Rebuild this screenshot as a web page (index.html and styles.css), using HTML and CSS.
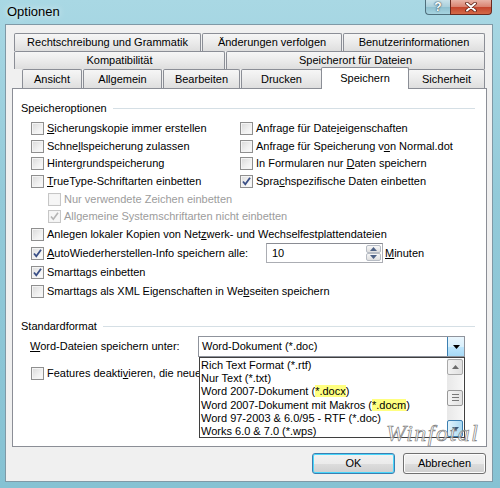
FILE: index.html
```html
<!DOCTYPE html>
<html lang="de">
<head>
    <meta charset="UTF-8">
    <title>Optionen</title>
    <link rel="stylesheet" href="styles.css">
</head>
<body>
    <div class="window">
        <div class="titlebar">
            <span class="title">Optionen</span>
            <div class="caption-buttons">
                <span class="cap-btn help">?</span>
                <span class="cap-btn close">
                    <svg width="14" height="10" viewBox="0 0 14 10"><path d="M3 1.5 L11 8.5 M11 1.5 L3 8.5" stroke="#5a1d12" stroke-width="3.6" stroke-linecap="round"/><path d="M3 1.5 L11 8.5 M11 1.5 L3 8.5" stroke="#ffffff" stroke-width="2" stroke-linecap="round"/></svg>
                </span>
            </div>
        </div>

        <div class="client">
            <div class="tabs">
                <div class="tab-row row-a">
                    <div class="tab t-recht">Rechtschreibung und Grammatik</div>
                    <div class="tab t-aend">Änderungen verfolgen</div>
                    <div class="tab t-benutzer">Benutzerinformationen</div>
                </div>
                <div class="tab-row row-b">
                    <div class="tab t-kompat">Kompatibilität</div>
                    <div class="tab t-ort">Speicherort für Dateien</div>
                </div>
                <div class="tab-row row-c">
                    <div class="tab t-ansicht">Ansicht</div>
                    <div class="tab t-allg">Allgemein</div>
                    <div class="tab t-bearb">Bearbeiten</div>
                    <div class="tab t-druck">Drucken</div>
                    <div class="tab t-speich selected">Speichern</div>
                    <div class="tab t-sicher">Sicherheit</div>
                </div>
            </div>

            <div class="panel">
                <div class="group-head"><span>Speicheroptionen</span><i class="rule"></i></div>

                <div class="options">
                    <div class="row">
                        <div class="cell-left"><span class="cb"></span><span class="lbl"><u>S</u>icherungskopie immer erstellen</span></div>
                        <div class="cell-right"><span class="cb"></span><span class="lbl">Anfrage für Date<u>i</u>eigenschaften</span></div>
                    </div>
                    <div class="row h17">
                        <div class="cell-left"><span class="cb"></span><span class="lbl">Schne<u>l</u>lspeicherung zulassen</span></div>
                        <div class="cell-right"><span class="cb"></span><span class="lbl">Anfrage für Speicherung v<u>o</u>n Normal.dot</span></div>
                    </div>
                    <div class="row">
                        <div class="cell-left"><span class="cb"></span><span class="lbl">Hinter<u>g</u>rundspeicherung</span></div>
                        <div class="cell-right"><span class="cb"></span><span class="lbl">In Formularen nur <u>D</u>aten speichern</span></div>
                    </div>
                    <div class="row">
                        <div class="cell-left"><span class="cb"></span><span class="lbl"><u>T</u>rueType-Schriftarten einbetten</span></div>
                        <div class="cell-right"><span class="cb checked"><svg width="11" height="11" viewBox="0 0 11 11"><path d="M2 5.5 L4.3 8.3 L9 1.8" fill="none" stroke="#3a4f86" stroke-width="1.8"/></svg></span><span class="lbl">Spra<u>c</u>hspezifische Daten einbetten</span></div>
                    </div>
                    <div class="row h17 indent disabled">
                        <span class="cb"></span><span class="lbl">Nur verwendete Zeichen einbetten</span>
                    </div>
                    <div class="row indent disabled">
                        <span class="cb checked"><svg width="11" height="11" viewBox="0 0 11 11"><path d="M2 5.5 L4.3 8.3 L9 1.8" fill="none" stroke="#b4b4b4" stroke-width="1.6"/></svg></span><span class="lbl">Allgemeine Systemschriftarten nicht einbetten</span>
                    </div>
                    <div class="row h19">
                        <span class="cb"></span><span class="lbl">Anlegen lokaler Kopien von Net<u>z</u>werk- und Wechselfestplattendateien</span>
                    </div>
                    <div class="row h19">
                        <div class="cell-auto"><span class="cb checked"><svg width="11" height="11" viewBox="0 0 11 11"><path d="M2 5.5 L4.3 8.3 L9 1.8" fill="none" stroke="#3a4f86" stroke-width="1.8"/></svg></span><span class="lbl"><u>A</u>utoWiederherstellen-Info speichern alle:</span></div>
                        <div class="spin">
                            <span class="spin-value">10</span>
                            <span class="spin-btns">
                                <span class="spin-btn"><svg width="7" height="4" viewBox="0 0 7 4"><path d="M0 4 L3.5 0 L7 4Z" fill="#4d6185"/></svg></span>
                                <span class="spin-btn"><svg width="7" height="4" viewBox="0 0 7 4"><path d="M0 0 L3.5 4 L7 0Z" fill="#4d6185"/></svg></span>
                            </span>
                        </div>
                        <span class="lbl minutes"><u>M</u>inuten</span>
                    </div>
                    <div class="row h19">
                        <span class="cb checked"><svg width="11" height="11" viewBox="0 0 11 11"><path d="M2 5.5 L4.3 8.3 L9 1.8" fill="none" stroke="#3a4f86" stroke-width="1.8"/></svg></span><span class="lbl">Smartta<u>g</u>s einbetten</span>
                    </div>
                    <div class="row h19">
                        <span class="cb"></span><span class="lbl">Smarttags als XML Eigenschaften in We<u>b</u>seiten speichern</span>
                    </div>
                </div>

                <div class="group-head second"><span>Standardformat</span><i class="rule"></i></div>

                <div class="format-row">
                    <span class="format-label"><u>W</u>ord-Dateien speichern unter:</span>
                    <div class="combo">
                        <span class="combo-value">Word-Dokument (*.doc)</span>
                        <span class="combo-btn"><svg width="7" height="4" viewBox="0 0 7 4"><path d="M0 0 L7 0 L3.5 4Z" fill="#000"/></svg></span>
                        <div class="droplist">
                            <div class="item">Rich Text Format (*.rtf)</div>
                            <div class="item">Nur Text (*.txt)</div>
                            <div class="item">Word 2007-Dokument (<mark>*.docx</mark>)</div>
                            <div class="item">Word 2007-Dokument mit Makros (<mark>*.docm</mark>)</div>
                            <div class="item">Word 97-2003 &amp; 6.0/95 - RTF (*.doc)</div>
                            <div class="item">Works 6.0 &amp; 7.0 (*.wps)</div>
                            <div class="scrollbar">
                                <span class="sb-btn"><svg width="7" height="4" viewBox="0 0 7 4"><path d="M0 4 L3.5 0 L7 4Z" fill="#6b6b6b"/></svg></span>
                                <span class="sb-thumb"><i></i><i></i><i></i></span>
                                <span class="sb-btn hot"><svg width="7" height="4" viewBox="0 0 7 4"><path d="M0 0 L3.5 4 L7 0Z" fill="#3b5a7a"/></svg></span>
                            </div>
                        </div>
                    </div>
                </div>

                <div class="row h17 features">
                    <span class="cb"></span><span class="lbl">Features deakti<u>v</u>ieren, die neue</span>
                </div>

                <span class="watermark">Winfotal</span>
            </div>

            <div class="dialog-buttons">
                <span class="btn default">OK</span>
                <span class="btn">Abbrechen</span>
            </div>
        </div>
    </div>
</body>
</html>
```

FILE: styles.css
```css
* {
    margin: 0;
    padding: 0;
    box-sizing: border-box;
}

body {
    width: 500px;
    height: 488px;
    overflow: hidden;
    font-family: 'Liberation Sans', Arial, sans-serif;
    font-size: 11px;
    color: #000;
    background: #fff;
}

u {
    text-decoration: underline;
    text-underline-offset: 1px;
}

.window {
    width: 500px;
    height: 488px;
    background: linear-gradient(180deg, #a9d8e4 0%, #93cad9 40%, #86c2d3 100%);
}

/* title bar */

.titlebar {
    height: 24px;
    display: flex;
    justify-content: space-between;
    align-items: flex-start;
}

.title {
    padding: 5px 0 0 7px;
    font-size: 13px;
    line-height: 14px;
    color: #000;
    text-shadow: 0 0 6px rgba(255, 255, 255, 0.9);
}

.caption-buttons {
    display: flex;
    margin-right: 8px;
}

.cap-btn {
    height: 15px;
    display: flex;
    align-items: center;
    justify-content: center;
    border: 1px solid #4f6f7c;
    border-top: none;
}

.cap-btn.help {
    width: 25px;
    border-radius: 0 0 0 4px;
    border-right: none;
    background: linear-gradient(180deg, #c8e2ea 0%, #a9cfdb 50%, #8fc0cf 51%, #a7d4e0 100%);
    color: #fff;
    font-weight: bold;
    font-size: 12px;
    text-shadow: 0 0 1px #2d4a57, 0 0 2px #2d4a57;
}

.cap-btn.close {
    width: 42px;
    border-radius: 0 0 4px 0;
    border-color: #6b2a20;
    background: linear-gradient(180deg, #e8b3a6 0%, #d9826f 50%, #c4442c 51%, #d46a48 100%);
}

/* client area */

.client {
    margin: 0 7px 0 5px;
    height: 458px;
    background: #f0f0f0;
    border: 1px solid #7f99a6;
    padding: 8px 5px 0 6px;
}

.tab-row {
    display: flex;
    gap: 1px;
    height: 18px;
}

.row-a,
.row-b {
    margin-left: 2px;
}

.row-c {
    margin-left: 10px;
    height: 19px;
}

.tab {
    height: 100%;
    border: 1px solid #8b8e96;
    border-bottom: none;
    border-radius: 2px 2px 0 0;
    background: linear-gradient(180deg, #f6f6f6 0%, #ebebeb 50%, #dedede 100%);
    text-align: center;
    line-height: 17px;
    white-space: nowrap;
}

.t-recht { width: 187px; }
.t-aend { width: 140px; }
.t-benutzer { width: 142px; }
.t-kompat { width: 211px; }
.t-ort { width: 259px; }
.t-ansicht { width: 60px; }
.t-allg { width: 79px; }
.t-bearb { width: 77px; }
.t-druck { width: 81px; }
.t-speich { width: 88px; }
.t-sicher { width: 77px; }

.tab.selected {
    position: relative;
    z-index: 1;
    height: 22px;
    margin: -2px -2px 0 -2px;
    background: #fff;
    line-height: 20px;
}

.row-c .tab:not(.selected) {
    line-height: 18px;
}

/* panel */

.panel {
    position: relative;
    height: 359px;
    background: #fff;
    border: 1px solid #8b8e96;
    padding: 0 11px 0 8px;
}

.group-head {
    display: flex;
    align-items: center;
    height: 14px;
    margin-top: 12px;
    line-height: 14px;
}

.group-head.second {
    margin-top: 17px;
}

.rule {
    flex: 1;
    height: 1px;
    margin-left: 6px;
    background: #d5dfe5;
}

.options {
    margin-top: 5px;
    padding-left: 10px;
}

.row {
    display: flex;
    align-items: flex-start;
    height: 18px;
    white-space: nowrap;
}

.row.h17 { height: 17px; }
.row.h19 { height: 19px; }

.row.indent {
    padding-left: 17px;
}

.cell-left {
    display: flex;
    width: 209px;
}

.cell-right,
.cell-auto {
    display: flex;
}

.cell-auto {
    width: 235px;
}

.cb {
    flex: none;
    width: 13px;
    height: 13px;
    margin-top: 2px;
    border: 1px solid #8f8f8f;
    background: linear-gradient(135deg, #d9d9d9 0%, #f1f1f1 60%, #fbfbfb 100%);
    box-shadow: inset 0 0 0 1px #f4f4f4;
    display: flex;
    align-items: center;
    justify-content: center;
}

.cb.checked {
    background: linear-gradient(135deg, #dcdcdc 0%, #f3f3f3 60%, #fff 100%);
}

.lbl {
    margin-left: 3px;
    line-height: 17px;
}

.disabled .lbl {
    color: #9c9c9c;
}

.disabled .cb {
    border-color: #c6c6c6;
    background: #f6f6f6;
}

.spin {
    display: flex;
    width: 117px;
    height: 20px;
    margin-top: -2px;
    border: 1px solid #abadb3;
    border-top-color: #8a8c93;
    background: #fff;
    padding: 1px;
}

.spin-value {
    flex: 1;
    padding-left: 4px;
    line-height: 16px;
}

.spin-btns {
    width: 15px;
    display: flex;
    flex-direction: column;
}

.spin-btn {
    flex: 1;
    display: flex;
    align-items: center;
    justify-content: center;
    border: 1px solid #b7bcc4;
    border-radius: 2px;
    background: linear-gradient(180deg, #f7f7f7, #dedede);
}

.lbl.minutes {
    margin-left: 2px;
}

/* standard format */

.format-row {
    display: flex;
    height: 21px;
    margin-top: 3px;
    padding-left: 9px;
}

.format-label {
    width: 168px;
    line-height: 21px;
}

.combo {
    position: relative;
    width: 267px;
    height: 21px;
    border: 1px solid #8f939c;
    background: #fff;
    display: flex;
}

.combo-value {
    flex: 1;
    padding-left: 3px;
    line-height: 19px;
}

.combo-btn {
    width: 17px;
    display: flex;
    align-items: center;
    justify-content: center;
    border-left: 1px solid #3c7fb1;
    background: linear-gradient(180deg, #eaf6fd 0%, #d9f0fc 50%, #bee6fd 51%, #a7d9f5 100%);
}

.droplist {
    position: absolute;
    z-index: 2;
    top: 20px;
    left: 0;
    width: 266px;
    height: 81px;
    border: 1px solid #3f3f3f;
    background: #fff;
    padding-top: 1px;
}

.item {
    height: 13.2px;
    line-height: 13px;
    padding-left: 1px;
    white-space: nowrap;
}

mark {
    background: #ffff80;
    color: #000;
}

.scrollbar {
    position: absolute;
    top: 1px;
    right: 1px;
    bottom: 0;
    width: 16px;
    display: flex;
    flex-direction: column;
    justify-content: space-between;
    background: linear-gradient(90deg, #e8e8e8, #f6f6f6);
}

.sb-btn {
    height: 16px;
    display: flex;
    align-items: center;
    justify-content: center;
    border: 1px solid #a9a9a9;
    border-radius: 2px;
    background: linear-gradient(90deg, #f2f2f2, #e0e0e0);
}

.sb-btn.hot {
    height: 17px;
    border-color: #3c7fb1;
    background: linear-gradient(90deg, #e3f4fc, #a9d9f2);
}

.sb-thumb {
    height: 16px;
    margin: 0;
    display: flex;
    flex-direction: column;
    align-items: center;
    justify-content: center;
    gap: 2px;
    border: 1px solid #999;
    border-radius: 2px;
    background: linear-gradient(90deg, #f4f4f4, #e2e2e2);
}

.sb-thumb i {
    width: 7px;
    height: 1px;
    background: #777;
}

.features {
    margin-top: 8px;
    padding-left: 10px;
}

.watermark {
    position: absolute;
    z-index: 3;
    left: 373px;
    top: 331px;
    font-family: 'Liberation Serif', serif;
    font-style: italic;
    font-size: 24px;
    letter-spacing: 1.5px;
    color: rgba(255, 255, 255, 0.6);
    -webkit-text-stroke: 0.7px #7d7d7d;
}

/* dialog buttons */

.dialog-buttons {
    display: flex;
    justify-content: flex-end;
    gap: 8px;
    margin-top: 6px;
    padding-right: 1px;
}

.btn {
    width: 83px;
    height: 21px;
    border: 1px solid #707070;
    border-radius: 3px;
    background: linear-gradient(180deg, #f2f2f2 0%, #ebebeb 50%, #dddddd 51%, #cfcfcf 100%);
    text-align: center;
    line-height: 19px;
    box-shadow: inset 0 0 0 1px #fcfcfc;
}

.btn.default {
    border-color: #3c7fb1;
    box-shadow: inset 0 0 0 1px #48d6fb;
}
```
